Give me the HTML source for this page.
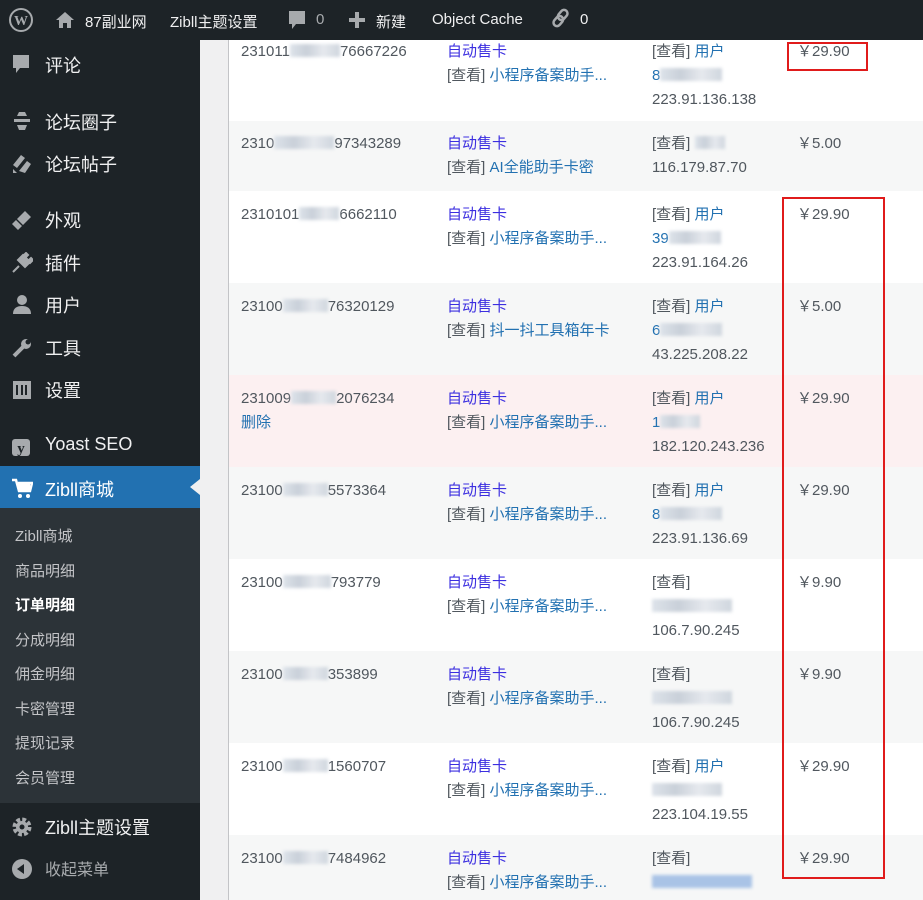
<!DOCTYPE html>
<html><head><meta charset="utf-8"><style>
*{margin:0;padding:0;box-sizing:border-box}
body{width:923px;height:900px;overflow:hidden;background:#f0f0f1;font-family:"Liberation Sans","Noto Sans CJK SC",sans-serif;position:relative}
.bar{position:absolute;left:0;top:0;width:923px;height:40px;background:#1d2327;color:#f0f0f1;font-size:15px}
.bar span{position:absolute;top:11px;white-space:nowrap}
.side{position:absolute;left:0;top:40px;width:200px;height:860px;background:#1d2327}
.mi{position:absolute;left:0;width:200px;color:#f0f0f1;font-size:18px}
.mi .t{position:absolute;left:45px;top:0}
.mi svg{position:absolute;left:11px;top:2px}
.sub{position:absolute;left:0;top:508px;width:200px;height:295px;background:#2c3338}
.si{position:absolute;left:15px;color:#c3c4c7;font-size:15px}
.tbl{position:absolute;left:228px;top:40px;width:695px;height:860px;border-left:1px solid #c3c4c7;background:#fff}
.row{position:absolute;left:0;width:695px}
.c{position:absolute;font-size:15px;line-height:24px;color:#50575e;white-space:nowrap}
.p{color:#3c2fe0}.b{color:#2271b1}
.bl{display:inline-block;height:13px;vertical-align:-1px;background:linear-gradient(90deg,#dde3ea,#c9d0d9,#e6e9ee,#cfd6de);filter:blur(1.5px)}
.red{position:absolute;border:2px solid #e01b1b}
</style></head><body>
<div class="bar">
<svg style="position:absolute;left:9px;top:8px" width="24" height="24" viewBox="0 0 24 24"><circle cx="12" cy="12" r="11" fill="none" stroke="#a7aaad" stroke-width="2"/><text x="12" y="17" font-size="14" font-weight="bold" text-anchor="middle" fill="#a7aaad" font-family="Liberation Serif">W</text></svg>
<svg style="position:absolute;left:55px;top:10px" width="20" height="20" viewBox="0 0 20 20"><path d="M10 2 1 10h3v8h4v-5h4v5h4v-8h3z" fill="#a7aaad"/></svg>
<span style="left:85px">87副业网</span>
<span style="left:170px">Zibll主题设置</span>
<svg style="position:absolute;left:287px;top:10px" width="20" height="22" viewBox="0 0 20 22"><path d="M2 1h16v13H9l-4 5v-5H2z" fill="#a7aaad"/></svg>
<span style="left:316px;color:#a7aaad">0</span>
<svg style="position:absolute;left:349px;top:12px" width="16" height="16" viewBox="0 0 16 16"><path d="M6 0h4v6h6v4h-6v6H6v-6H0V6h6z" fill="#a7aaad"/></svg>
<span style="left:376px">新建</span>
<span style="left:432px">Object Cache</span>
<svg style="position:absolute;left:550px;top:7px" width="22" height="22" viewBox="0 0 22 22"><g fill="none" stroke="#a7aaad" stroke-width="2.5"><rect x="9" y="2" width="7" height="11" rx="3.5" transform="rotate(40 12 8)"/><rect x="5" y="9" width="7" height="11" rx="3.5" transform="rotate(40 9 14)"/></g></svg>
<span style="left:580px">0</span>
</div>
<div class="side">
<div class="mi" style="top:12px"><svg width="20" height="22" viewBox="0 0 20 22"><path d="M2 1h16v13H9l-4 5v-5H2z" fill="#a7aaad"/></svg><div class="t">评论</div></div>
<div class="mi" style="top:69px"><svg width="22" height="20" viewBox="0 0 22 20"><path d="M8 1h6l2 4H6zM3 8h16v3H3zM6 14h10l-2 5H8z" fill="#a7aaad"/></svg><div class="t">论坛圈子</div></div>
<div class="mi" style="top:111px"><svg width="22" height="22" viewBox="0 0 22 22"><path d="M2 12 10 2l4 3-8 10zM8 18l8-10 4 3-6 9zM2 16l4 4H2z" fill="#a7aaad"/></svg><div class="t">论坛帖子</div></div>
<div class="mi" style="top:167px"><svg width="22" height="22" viewBox="0 0 22 22"><path d="M14 2l6 6-8 8-6-6zM5 11l6 6-4 4-6-6z" fill="#a7aaad"/></svg><div class="t">外观</div></div>
<div class="mi" style="top:210px"><svg width="22" height="22" viewBox="0 0 22 22"><path d="M12 3l7 7-5 5-7-7zM15 1l2 2-3 3-2-2zM20 6l2 2-3 3-2-2zM8 14l-6 6" stroke="#a7aaad" stroke-width="2" fill="#a7aaad"/></svg><div class="t">插件</div></div>
<div class="mi" style="top:252px"><svg width="22" height="22" viewBox="0 0 22 22"><circle cx="11" cy="6" r="5" fill="#a7aaad"/><path d="M2 20c0-6 4-8 9-8s9 2 9 8z" fill="#a7aaad"/></svg><div class="t">用户</div></div>
<div class="mi" style="top:295px"><svg width="22" height="22" viewBox="0 0 22 22"><path d="M3 19l9-9" stroke="#a7aaad" stroke-width="4"/><circle cx="15" cy="7" r="5" fill="#a7aaad"/><circle cx="17" cy="5" r="2.5" fill="#1d2327"/></svg><div class="t">工具</div></div>
<div class="mi" style="top:337px"><svg width="22" height="22" viewBox="0 0 22 22"><rect x="2" y="2" width="18" height="18" fill="#a7aaad"/><path d="M6 6v10M11 6v10M15 6v10" stroke="#1d2327" stroke-width="2"/></svg><div class="t">设置</div></div>
<div class="mi" style="top:394px"><svg width="22" height="22" viewBox="0 0 22 22"><rect x="1" y="3" width="18" height="17" rx="3" fill="#a7aaad"/><text x="10" y="17" font-size="15" font-weight="bold" text-anchor="middle" fill="#1d2327" font-family="Liberation Serif">y</text></svg><div class="t">Yoast SEO</div></div>
<div style="position:absolute;left:0;top:426px;width:200px;height:42px;background:#2271b1"></div>
<div style="position:absolute;left:190px;top:439px;width:0;height:0;border-top:8px solid transparent;border-bottom:8px solid transparent;border-right:10px solid #f0f0f1"></div>
<div class="mi" style="top:436px"><svg width="22" height="22" viewBox="0 0 22 22"><path d="M1 2h4l3 11h11l2-8H7" fill="none" stroke="#fff" stroke-width="2.5"/><rect x="7" y="6" width="12" height="6" fill="#fff"/><circle cx="9" cy="18" r="2" fill="#fff"/><circle cx="17" cy="18" r="2" fill="#fff"/></svg><div class="t" style="color:#fff">Zibll商城</div></div>
</div>
<div class="sub">
<div class="si" style="top:17px">Zibll商城</div>
<div class="si" style="top:52px">商品明细</div>
<div class="si" style="top:86px;color:#fff;font-weight:bold">订单明细</div>
<div class="si" style="top:121px">分成明细</div>
<div class="si" style="top:155px">佣金明细</div>
<div class="si" style="top:190px">卡密管理</div>
<div class="si" style="top:224px">提现记录</div>
<div class="si" style="top:259px">会员管理</div>
</div>
<div class="mi" style="top:814px"><svg width="22" height="22" viewBox="0 0 22 22"><circle cx="11" cy="11" r="7" fill="none" stroke="#a7aaad" stroke-width="5" stroke-dasharray="3.5 2"/><circle cx="11" cy="11" r="6" fill="#a7aaad"/><circle cx="11" cy="11" r="2.5" fill="#1d2327"/></svg><div class="t">Zibll主题设置</div></div>
<div class="mi" style="top:856px;color:#a7aaad;font-size:16px"><svg width="22" height="22" viewBox="0 0 22 22"><circle cx="11" cy="11" r="10" fill="#a7aaad"/><path d="M13 6v10l-7-5z" fill="#1d2327"/></svg><div class="t">收起菜单</div></div>

<div class="tbl">
<div class="row" style="top:0;height:81px;background:#fff"></div>
<div class="row" style="top:81px;height:70px;background:#f6f7f7"></div>
<div class="row" style="top:151px;height:92px;background:#fff"></div>
<div class="row" style="top:243px;height:92px;background:#f6f7f7"></div>
<div class="row" style="top:335px;height:92px;background:#fcf0f1"></div>
<div class="row" style="top:427px;height:92px;background:#f6f7f7"></div>
<div class="row" style="top:519px;height:92px;background:#fff"></div>
<div class="row" style="top:611px;height:92px;background:#f6f7f7"></div>
<div class="row" style="top:703px;height:92px;background:#fff"></div>
<div class="row" style="top:795px;height:65px;background:#f6f7f7"></div>
</div>

<div class="c" style="left:241px;top:40px">231011<span class="bl" style="width:50px"></span>76667226</div>
<div class="c" style="left:447px;top:40px"><span class="p">自动售卡</span><br>[查看] <span class="b">小程序备案助手...</span></div>
<div class="c" style="left:652px;top:40px">[查看] <span class="b">用户</span><br><span class="b">8</span><span class="bl" style="width:62px"></span><br>223.91.136.138</div>
<div class="c" style="left:797px;top:40px">￥29.90</div>

<div class="c" style="left:241px;top:132px">2310<span class="bl" style="width:60px"></span>97343289</div>
<div class="c" style="left:447px;top:132px"><span class="p">自动售卡</span><br>[查看] <span class="b">AI全能助手卡密</span></div>
<div class="c" style="left:652px;top:132px">[查看] <span class="bl" style="width:30px"></span><br>116.179.87.70</div>
<div class="c" style="left:797px;top:132px">￥5.00</div>

<div class="c" style="left:241px;top:203px">2310101<span class="bl" style="width:40px"></span>6662110</div>
<div class="c" style="left:447px;top:203px"><span class="p">自动售卡</span><br>[查看] <span class="b">小程序备案助手...</span></div>
<div class="c" style="left:652px;top:203px">[查看] <span class="b">用户</span><br><span class="b">39</span><span class="bl" style="width:52px"></span><br>223.91.164.26</div>
<div class="c" style="left:797px;top:203px">￥29.90</div>

<div class="c" style="left:241px;top:295px">23100<span class="bl" style="width:45px"></span>76320129</div>
<div class="c" style="left:447px;top:295px"><span class="p">自动售卡</span><br>[查看] <span class="b">抖一抖工具箱年卡</span></div>
<div class="c" style="left:652px;top:295px">[查看] <span class="b">用户</span><br><span class="b">6</span><span class="bl" style="width:62px"></span><br>43.225.208.22</div>
<div class="c" style="left:797px;top:295px">￥5.00</div>

<div class="c" style="left:241px;top:387px">231009<span class="bl" style="width:45px"></span>2076234<br><span class="b">删除</span></div>
<div class="c" style="left:447px;top:387px"><span class="p">自动售卡</span><br>[查看] <span class="b">小程序备案助手...</span></div>
<div class="c" style="left:652px;top:387px">[查看] <span class="b">用户</span><br><span class="b">1</span><span class="bl" style="width:40px"></span><br>182.120.243.236</div>
<div class="c" style="left:797px;top:387px">￥29.90</div>

<div class="c" style="left:241px;top:479px">23100<span class="bl" style="width:45px"></span>5573364</div>
<div class="c" style="left:447px;top:479px"><span class="p">自动售卡</span><br>[查看] <span class="b">小程序备案助手...</span></div>
<div class="c" style="left:652px;top:479px">[查看] <span class="b">用户</span><br><span class="b">8</span><span class="bl" style="width:62px"></span><br>223.91.136.69</div>
<div class="c" style="left:797px;top:479px">￥29.90</div>

<div class="c" style="left:241px;top:571px">23100<span class="bl" style="width:48px"></span>793779</div>
<div class="c" style="left:447px;top:571px"><span class="p">自动售卡</span><br>[查看] <span class="b">小程序备案助手...</span></div>
<div class="c" style="left:652px;top:571px">[查看]<br><span class="bl" style="width:80px"></span><br>106.7.90.245</div>
<div class="c" style="left:797px;top:571px">￥9.90</div>

<div class="c" style="left:241px;top:663px">23100<span class="bl" style="width:45px"></span>353899</div>
<div class="c" style="left:447px;top:663px"><span class="p">自动售卡</span><br>[查看] <span class="b">小程序备案助手...</span></div>
<div class="c" style="left:652px;top:663px">[查看]<br><span class="bl" style="width:80px"></span><br>106.7.90.245</div>
<div class="c" style="left:797px;top:663px">￥9.90</div>

<div class="c" style="left:241px;top:755px">23100<span class="bl" style="width:45px"></span>1560707</div>
<div class="c" style="left:447px;top:755px"><span class="p">自动售卡</span><br>[查看] <span class="b">小程序备案助手...</span></div>
<div class="c" style="left:652px;top:755px">[查看] <span class="b">用户</span><br><span class="bl" style="width:70px"></span><br>223.104.19.55</div>
<div class="c" style="left:797px;top:755px">￥29.90</div>

<div class="c" style="left:241px;top:847px">23100<span class="bl" style="width:45px"></span>7484962</div>
<div class="c" style="left:447px;top:847px"><span class="p">自动售卡</span><br>[查看] <span class="b">小程序备案助手...</span></div>
<div class="c" style="left:652px;top:847px">[查看]<br><span class="bl" style="width:100px;background:#a9c3e6"></span></div>
<div class="c" style="left:797px;top:847px">￥29.90</div>

<div class="red" style="left:787px;top:42px;width:81px;height:29px"></div>
<div class="red" style="left:782px;top:197px;width:103px;height:682px"></div>
</body></html>
